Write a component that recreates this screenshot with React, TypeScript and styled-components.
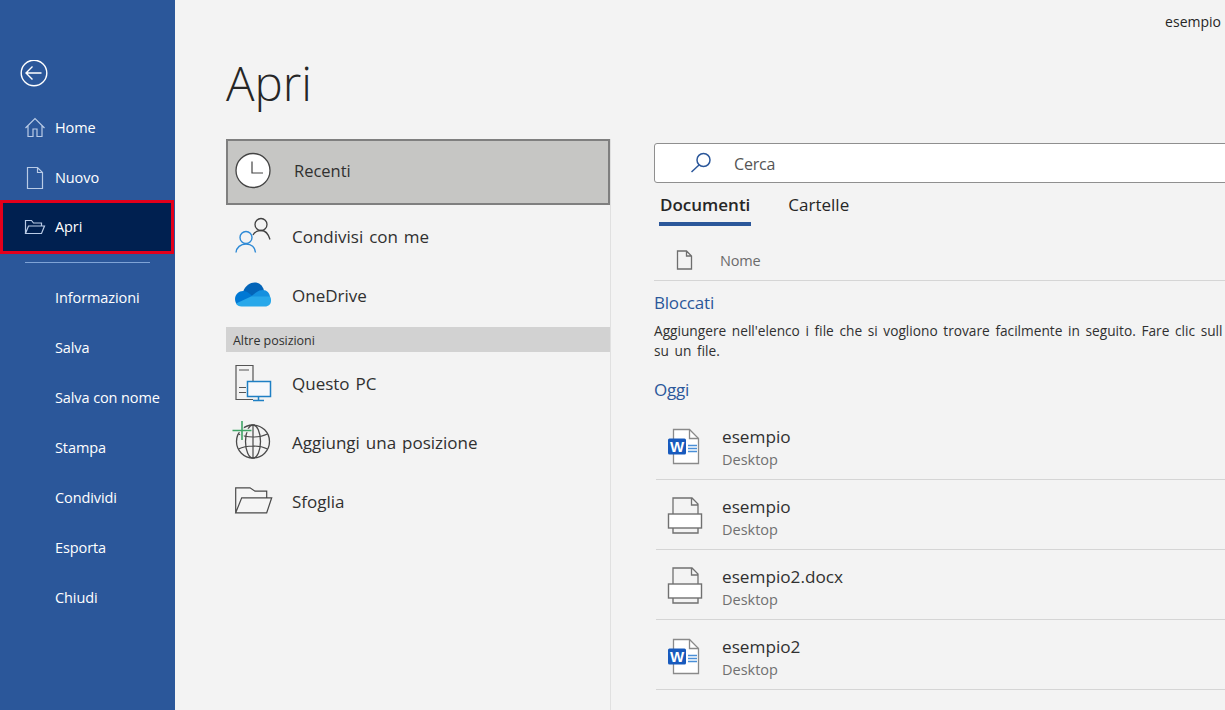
import React from "react";
import styled, { createGlobalStyle } from "styled-components";

const Global = createGlobalStyle`
  html, body { margin: 0; padding: 0; background: #f3f3f3; overflow: hidden; }
  * { box-sizing: border-box; }
`;

const Page = styled.div`
  display: flex;
  width: 1225px;
  height: 710px;
  overflow: hidden;
  background: #f3f3f3;
  color: #262626;
  font-family: "Open Sans", "Noto Sans", sans-serif;
`;

const Sidebar = styled.nav`
  flex: none;
  width: 175px;
  height: 100%;
  background: #2b579a;
  color: #fff;
  padding-top: 52px;
  display: flex;
  flex-direction: column;
`;

const BackButton = styled.div`
  height: 50px;
  padding: 8px 0 0 20px;
  display: flex;
  align-items: flex-start;
`;

const NavItem = styled.div<{ $active?: boolean }>`
  height: ${(p) => (p.$active ? "54px" : "50px")};
  width: ${(p) => (p.$active ? "174px" : "100%")};
  margin: ${(p) => (p.$active ? "-2px 0" : "0")};
  display: flex;
  align-items: center;
  padding-left: ${(p) => (p.$active ? "52px" : "55px")};
  padding-bottom: ${(p) => (p.$active ? "1px" : "0")};
  position: relative;
  font-size: 14.5px;
  letter-spacing: -0.1px;
  background: ${(p) => (p.$active ? "#002050" : "transparent")};
  border: ${(p) => (p.$active ? "3px solid #e3001b" : "none")};
`;

const NavIcon = styled.svg<{ $active?: boolean }>`
  position: absolute;
  left: ${(p) => (p.$active ? "20px" : "23px")};
  top: ${(p) => (p.$active ? "12px" : "13px")};
  width: 24px;
  height: 24px;
  fill: none;
  stroke: #b9cbe6;
  stroke-width: 1.2;
`;

const NavDivider = styled.div`
  width: 125px;
  height: 1px;
  margin: 10px 0 9px 25px;
  background: #7fa3d6;
`;

const Main = styled.main`
  flex: 1;
  min-width: 0;
  display: flex;
  flex-direction: column;
`;

const TopBar = styled.div`
  height: 42px;
  display: flex;
  justify-content: flex-end;
  align-items: center;
  padding-right: 4px;
  font-size: 14px;
`;

const Title = styled.h1`
  margin: 0 0 0 51px;
  height: 97px;
  font-size: 47.5px;
  line-height: 82px;
  font-weight: 300;
  color: #262626;
`;

const Columns = styled.div`
  display: flex;
  flex: 1;
  min-height: 0;
`;

const Places = styled.section`
  flex: none;
  width: 436px;
  padding-left: 51px;
  border-right: 1px solid #e0e0e0;
`;

const RecentRow = styled.div`
  width: 384px;
  height: 66px;
  margin-right: -1px;
  margin-bottom: 2px;
  background: #c6c6c4;
  border: 2px solid #7f7f7f;
  display: flex;
  align-items: center;
  padding: 0 0 3px 6px;
  gap: 23px;
  font-size: 16.5px;
  color: #303030;
`;

const PlaceRow = styled.div`
  height: 59px;
  display: flex;
  align-items: center;
  padding-left: 8px;
  gap: 21px;
  font-size: 17px;
  word-spacing: 1.5px;
  color: #303030;
`;

const PlaceIcon = styled.svg`
  flex: none;
  width: 37px;
  height: 37px;
  fill: none;
  overflow: visible;
`;

const GroupLabel = styled.div`
  height: 25px;
  margin: 2px 0;
  padding-left: 7px;
  background: #d2d2d2;
  font-size: 12.5px;
  line-height: 27px;
  letter-spacing: -0.05px;
  color: #303030;
`;

const Files = styled.section`
  flex: none;
  width: 700px;
  margin-left: 43px;
  padding-top: 4px;
`;

const Search = styled.div`
  height: 40px;
  display: flex;
  align-items: center;
  background: #fff;
  border: 1px solid #8f8f8f;
  border-radius: 3px;
  padding: 1px 0 0 34px;
  gap: 21px;
  font-size: 16px;
  letter-spacing: -0.2px;
  color: #555;
`;

const SearchIcon = styled.svg`
  width: 24px;
  height: 24px;
  margin-top: -1px;
  fill: none;
  stroke: #2b579a;
  stroke-width: 1.5;
`;

const Tabs = styled.div`
  display: flex;
  gap: 36px;
  margin-top: 9px;
  padding-left: 5px;
`;

const Tab = styled.div<{ $active?: boolean }>`
  height: 34px;
  padding: 0 1px;
  font-size: 17px;
  line-height: 25px;
  font-weight: ${(p) => (p.$active ? 600 : 400)};
  color: #262626;
  border-bottom: 4px solid ${(p) => (p.$active ? "#2b579a" : "transparent")};
`;

const HeadRow = styled.div`
  height: 55px;
  padding-left: 22px;
  padding-top: 14px;
  display: flex;
  align-items: center;
  gap: 27px;
  border-bottom: 1px solid #d5d5d5;
  font-size: 14.5px;
  letter-spacing: -0.2px;
  color: #6b6b6b;
`;

const HeadIcon = styled.svg`
  width: 17px;
  height: 20px;
  fill: none;
  stroke: #6e6e6e;
  stroke-width: 1.3;
`;

const GroupTitle = styled.h2<{ $gap: number }>`
  margin: ${(p) => p.$gap}px 0 0;
  font-size: 17px;
  line-height: 22px;
  font-weight: 400;
  letter-spacing: -0.2px;
  color: #2b579a;
`;

const Hint = styled.p`
  margin: 7px 0 0;
  font-size: 13.7px;
  line-height: 20px;
  word-spacing: 2.1px;
  color: #303030;
  white-space: nowrap;
`;

const FileList = styled.div`
  margin-top: 9px;
  margin-left: 2px;
`;

const FileRow = styled.div`
  height: 70px;
  display: flex;
  align-items: center;
  padding: 5px 0 0 10px;
  gap: 16px;
  border-bottom: 1px solid #d5d5d5;
`;

const FileIcon = styled.svg`
  flex: none;
  width: 40px;
  height: 40px;
  fill: none;
`;

const FileText = styled.div`
  display: flex;
  flex-direction: column;
  gap: 2px;
  margin-top: 1px;
`;

const FileName = styled.div`
  font-size: 17.2px;
  line-height: 23px;
  color: #303030;
`;

const FileLocation = styled.div`
  font-size: 14.5px;
  line-height: 20px;
  color: #707070;
`;

const HomeGlyph = () => (
  <NavIcon viewBox="0 0 24 24">
    <path d="M2.500 13 12 3.500 21.500 13M5 11v10.500h5V14h4v7.500h5V11" />
  </NavIcon>
);
const NewGlyph = () => (
  <NavIcon viewBox="0 0 24 24">
    <path d="M4.500 2.500h10l5 5v16h-15zM14.500 2.500v5h5" />
  </NavIcon>
);
const OpenGlyph = () => (
  <NavIcon $active viewBox="0 0 24 24">
    <path d="M2.500 18.500v-13h6l2 2.500h8v3M2.500 18.500l3-7.500h16l-3 7.500z" />
  </NavIcon>
);

const Clock = () => (
  <PlaceIcon viewBox="0 0 37 37">
    <circle cx="19" cy="18.500" r="17" fill="#fff" stroke="#444" strokeWidth="1.3" />
    <path d="M18 9.500v11.500h11" stroke="#444" strokeWidth="1.200" />
  </PlaceIcon>
);
const People = () => (
  <PlaceIcon viewBox="0 0 37 37">
    <circle cx="27" cy="6.500" r="6" stroke="#404040" strokeWidth="1.3" />
    <path d="M19 17c1.500-3 4.500-4.500 8-4.500s7 2 9 9" stroke="#404040" strokeWidth="1.3" />
    <circle cx="12" cy="19.500" r="6" stroke="#2e8ad6" strokeWidth="1.400" />
    <path d="M2 34.500c.5-5 4.500-8.500 10-8.500s9 3.500 9.500 8.500" stroke="#2e8ad6" strokeWidth="1.400" />
  </PlaceIcon>
);
const Cloud = () => (
  <PlaceIcon viewBox="0 0 37 37">
    <path d="M9 15C11 8.500 16.500 5.500 20.500 5.500 25 5.500 28.500 8 30 13.500L20 23z" fill="#0364b8" />
    <path d="M9 14C5 14 1 17.500 1 22c0 2.500 1 4.500 2 5.500L21 21l-7-5.500C12.500 14.500 11 14 9 14z" fill="#0078d4" />
    <path d="M22 15.500c2-1.700 5-2.500 7-2.500 4 0 6.500 3 7 6.500l1 4.500-11 2-9-6.500z" fill="#1490df" />
    <path d="M2 26.500 17 19.500l19 0c.7 1.500 1 3 1 4.500 0 3-2.500 5.500-6 5.500H7.500C5 29.500 3 28.500 2 26.500z" fill="#28a8ea" />
  </PlaceIcon>
);
const Computer = () => (
  <PlaceIcon viewBox="0 0 37 37">
    <path d="M19 16V.5H2v34h17M5 5h10M5 22.500h7M5 27.500h7" stroke="#555" strokeWidth="1.200" />
    <rect x="13.500" y="16.500" width="23" height="15" fill="#f6f8fb" stroke="#1e7fc4" strokeWidth="1.500" />
    <path d="M24.500 31.500v4M19 35.500h11" stroke="#1e7fc4" strokeWidth="1.500" />
  </PlaceIcon>
);
const Globe = () => (
  <PlaceIcon viewBox="0 0 37 37">
    <circle cx="19" cy="17.500" r="16.500" stroke="#4a4a4a" strokeWidth="1.300" />
    <ellipse cx="19" cy="17.500" rx="7.500" ry="16.500" stroke="#4a4a4a" strokeWidth="1.300" />
    <path d="M4.500 10c4 2 9 3 14.500 3s10.500-1 14.500-3M4.500 25c4-2 9-3 14.500-3s10.500 1 14.500 3M19 1v33" stroke="#4a4a4a" strokeWidth="1.200" />
    <path d="M8 -3v19M-1.500 6.500h19" stroke="#f3f3f3" strokeWidth="3.500" />
    <path d="M8 -3v19M-1.500 6.500h19" stroke="#3fa466" strokeWidth="1.600" />
  </PlaceIcon>
);
const Folder = () => (
  <PlaceIcon viewBox="0 0 37 37">
    <path d="M1.700 29.800V4.800H16l5 3.400h11.700v6.600M7.700 14.800h30l-5 15H1.700z" stroke="#4a4a4a" strokeWidth="1.200" fill="#f5f5f5" />
  </PlaceIcon>
);
const WordFile = () => (
  <FileIcon viewBox="0 0 40 40">
    <path d="M7.500 2.500h16l9 9v25h-25z" fill="#fff" stroke="#8a8a8a" strokeWidth="1.300" />
    <path d="M23.500 2.500v9h9" stroke="#8a8a8a" strokeWidth="1.300" />
    <path d="M22 18.500h9M22 21.500h9M22 24.500h9" stroke="#4a8fd8" strokeWidth="1.400" />
    <rect x="2" y="11.500" width="18" height="16" rx="1.500" fill="#185abd" />
    <text x="11" y="24.800" textAnchor="middle" fontSize="15" fontWeight="700" fontFamily="Liberation Sans, sans-serif" fill="#fff">W</text>
  </FileIcon>
);
const Printer = () => (
  <FileIcon viewBox="0 0 40 40">
    <path d="M7 17V1h19l6 6V17M25.500 1v7H32" stroke="#707070" strokeWidth="1.300" />
    <rect x="2.500" y="17" width="33" height="14" fill="#fff" stroke="#707070" strokeWidth="1.400" />
    <path d="M7 31v5h25V31" stroke="#707070" strokeWidth="1.400" />
  </FileIcon>
);

const navTail = ["Informazioni", "Salva", "Salva con nome", "Stampa", "Condividi", "Esporta", "Chiudi"];
const files = [
  { name: "esempio", icon: <WordFile /> },
  { name: "esempio", icon: <Printer /> },
  { name: "esempio2.docx", icon: <Printer /> },
  { name: "esempio2", icon: <WordFile /> },
];

export default function App() {
  return (
    <Page>
      <Global />
      <Sidebar>
        <BackButton>
          <svg width="28" height="28" viewBox="0 0 28 28" fill="none" stroke="#fff" strokeWidth="1.400">
            <circle cx="14" cy="13" r="12.800" />
            <path d="M6 13h15.500M12.500 6.500 6 13l6.500 6.500" />
          </svg>
        </BackButton>
        <NavItem><HomeGlyph />Home</NavItem>
        <NavItem><NewGlyph />Nuovo</NavItem>
        <NavItem $active><OpenGlyph />Apri</NavItem>
        <NavDivider />
        {navTail.map((label) => (
          <NavItem key={label}>{label}</NavItem>
        ))}
      </Sidebar>
      <Main>
        <TopBar>esempio</TopBar>
        <Title>Apri</Title>
        <Columns>
          <Places>
            <RecentRow><Clock />Recenti</RecentRow>
            <PlaceRow><People />Condivisi con me</PlaceRow>
            <PlaceRow><Cloud />OneDrive</PlaceRow>
            <GroupLabel>Altre posizioni</GroupLabel>
            <PlaceRow><Computer />Questo PC</PlaceRow>
            <PlaceRow><Globe />Aggiungi una posizione</PlaceRow>
            <PlaceRow><Folder />Sfoglia</PlaceRow>
          </Places>
          <Files>
            <Search>
              <SearchIcon viewBox="0 0 24 24">
                <circle cx="14.500" cy="9" r="6.500" />
                <path d="M10 14 2.500 21" />
              </SearchIcon>
              Cerca
            </Search>
            <Tabs>
              <Tab $active>Documenti</Tab>
              <Tab>Cartelle</Tab>
            </Tabs>
            <HeadRow>
              <HeadIcon viewBox="0 0 17 20">
                <path d="M1.500 1h9l5 5v13h-14zM10.500 1v5h5" />
              </HeadIcon>
              Nome
            </HeadRow>
            <GroupTitle $gap={11}>Bloccati</GroupTitle>
            <Hint>
              Aggiungere nell'elenco i file che si vogliono trovare facilmente in seguito. Fare clic sull
              <br />
              su un file.
            </Hint>
            <GroupTitle $gap={18}>Oggi</GroupTitle>
            <FileList>
              {files.map((file, i) => (
                <FileRow key={i}>
                  {file.icon}
                  <FileText>
                    <FileName>{file.name}</FileName>
                    <FileLocation>Desktop</FileLocation>
                  </FileText>
                </FileRow>
              ))}
            </FileList>
          </Files>
        </Columns>
      </Main>
    </Page>
  );
}
